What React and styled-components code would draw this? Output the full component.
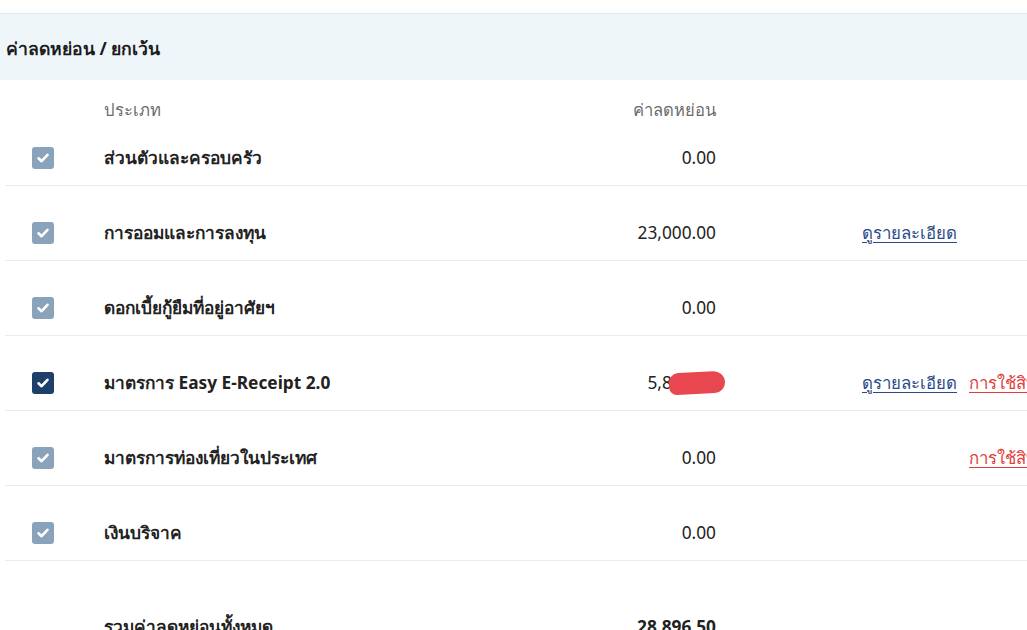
import React from "react";
import styled, { createGlobalStyle } from "styled-components";

const Global = createGlobalStyle`
  html, body { margin: 0; padding: 0; background: #fff; }
  body { font-family: "Noto Sans", "Open Sans", sans-serif; color: #222; overflow: hidden; }
`;

const Page = styled.div`
  width: 1027px;
  height: 630px;
  overflow: hidden;
  padding-top: 13px;
  box-sizing: border-box;
`;

const Section = styled.section`
  width: 1200px;
  border-top: 1px solid #e6eaee;
`;

const SectionHeader = styled.div`
  background: #eff6fa;
  height: 66px;
  box-sizing: border-box;
  padding-top: 3px;
  display: flex;
  align-items: center;
  padding-left: 6px;
  font-size: 17.6px;
  font-weight: 700;
  color: #1c1c1c;
`;

const Table = styled.div`
  margin-left: 5px;
`;

const Row = styled.div`
  display: grid;
  grid-template-columns: 22px 462px 200px 146px 107px auto;
  align-items: center;
  padding-left: 27px;
  padding-top: ${(p) => p.$top}px;
  padding-bottom: ${(p) => p.$bottom}px;
  border-bottom: ${(p) => (p.$divider ? "1.5px solid #e9eaeb" : "none")};
  line-height: 22px;
  font-size: 17.3px;
`;

const HeadCell = styled.div`
  color: #6b6b6b;
  font-size: 16.6px;
  text-align: ${(p) => (p.$right ? "right" : "left")};
  padding-left: ${(p) => (p.$right ? 0 : 50)}px;
  white-space: nowrap;
`;

const Label = styled.div`
  padding-left: 50px;
  font-weight: 700;
  color: #222;
  white-space: nowrap;
`;

const Amount = styled.div`
  text-align: right;
  font-weight: ${(p) => (p.$bold ? 700 : 400)};
  color: #222;
  position: relative;
  white-space: nowrap;
`;

const Spacer = styled.div``;

const DetailLink = styled.a`
  color: #2c4a86;
  text-decoration: underline;
  text-underline-offset: 3px;
  font-size: 16.8px;
  white-space: nowrap;
  cursor: pointer;
`;

const RightsLink = styled.a`
  color: #e23c3c;
  text-decoration: underline;
  text-underline-offset: 3px;
  font-size: 16.8px;
  white-space: nowrap;
  cursor: pointer;
`;

const Box = styled.div`
  width: 22px;
  height: 22px;
  border-radius: 3px;
  background: ${(p) => (p.$dark ? "#1d3f6a" : "#89a3bb")};
  display: flex;
  align-items: center;
  justify-content: center;
`;

const Redact = styled.span`
  position: absolute;
  right: -9px;
  top: 0px;
  width: 56px;
  height: 22px;
  background: #e8474f;
  border-radius: 10px 12px 11px 8px;
  transform: rotate(-3deg);
`;

const Check = ({ dark }) => (
  <Box $dark={dark}>
    <svg width="14" height="14" viewBox="0 0 14 14">
      <path d="M2.5 7.3 L5.6 10.2 L11.5 3.8" fill="none" stroke="#fff" strokeWidth="2.6" strokeLinecap="round" strokeLinejoin="round" />
    </svg>
  </Box>
);

const rows = [
  { label: "ส่วนตัวและครอบครัว", amount: "0.00", top: 26 },
  { label: "การออมและการลงทุน", amount: "23,000.00", detail: true },
  { label: "ดอกเบี้ยกู้ยืมที่อยู่อาศัยฯ", amount: "0.00" },
  { label: "มาตรการ Easy E-Receipt 2.0", amount: "5,896.50", detail: true, rights: true, dark: true, redact: true },
  { label: "มาตรการท่องเที่ยวในประเทศ", amount: "0.00", rights: true },
  { label: "เงินบริจาค", amount: "0.00" },
];

export default function App() {
  return (
    <>
      <Global />
      <Page>
        <Section>
          <SectionHeader>ค่าลดหย่อน / ยกเว้น</SectionHeader>
          <Table>
            <Row $top={19} $bottom={0}>
              <Spacer />
              <HeadCell>ประเภท</HeadCell>
              <HeadCell $right>ค่าลดหย่อน</HeadCell>
            </Row>
            {rows.map((r, i) => (
              <Row key={i} $divider $top={r.top ?? 36} $bottom={16}>
                <Check dark={r.dark} />
                <Label>{r.label}</Label>
                <Amount>
                  {r.amount}
                  {r.redact && <Redact />}
                </Amount>
                <Spacer />
                <div>{r.detail && <DetailLink>ดูรายละเอียด</DetailLink>}</div>
                <div>{r.rights && <RightsLink>การใช้สิทธิ</RightsLink>}</div>
              </Row>
            ))}
            <Row $top={55} $bottom={20}>
              <Spacer />
              <Label>รวมค่าลดหย่อนทั้งหมด</Label>
              <Amount $bold>28,896.50</Amount>
            </Row>
          </Table>
        </Section>
      </Page>
    </>
  );
}
